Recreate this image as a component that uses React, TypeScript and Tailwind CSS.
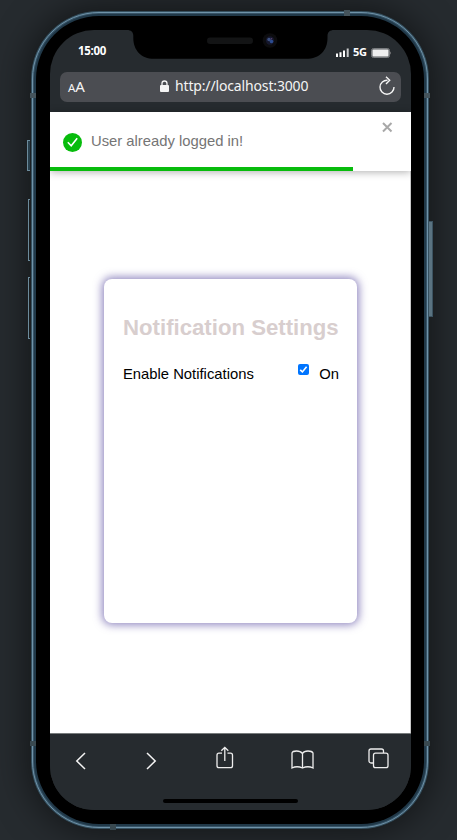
import React from "react";

function Notch() {
  return (
    <div className="absolute left-[77px] top-0">
      <svg width="207" height="30" viewBox="0 0 207 30" className="block">
        <path d="M0 -1V0C4 0 6.300 2 6.300 6V8C6.300 20 14 28.800 27 28.800H179C193 28.800 200.500 20 200.500 8V6C200.500 2 203 0 207 0V-1Z" fill="#000" />
        <rect x="80" y="7.500" width="46" height="6.500" rx="3.200" fill="#131415" />
        <circle cx="143" cy="10.500" r="7.300" fill="#0c0c0e" />
        <circle cx="143" cy="10.500" r="4.200" fill="#15172c" />
        <circle cx="142" cy="9.500" r="1.700" fill="#3c5080" />
        <circle cx="144.500" cy="11.500" r="1.800" fill="#2c4c90" />
        <circle cx="144.500" cy="8.700" r=".8" fill="#5a4273" />
      </svg>
    </div>
  );
}

function StatusBar() {
  return (
    <div className="flex h-[42px] items-start justify-between pl-[28px] pr-[20px] pt-[13px] font-['Noto_Sans',sans-serif] text-[11.500px] font-bold leading-4 text-white">
      <span className="tracking-[-0.300px]">15:00</span>
      <div className="mt-px flex items-center">
        <svg width="13" height="9" viewBox="0 0 13 9">
          <path d="M0 5.500h2V9H0zM3.500 4.200h2V9h-2zM7 2.500h2V9H7z" fill="#fff" />
          <path d="M10.700 .5h2V9h-2z" fill="#c9cacc" />
        </svg>
        <span className="ml-[4px] w-[14px] text-[11px] tracking-[-0.300px]">5G</span>
        <svg className="ml-[4px] mt-px" width="20" height="10" viewBox="0 0 20 10">
          <rect x=".5" y=".5" width="18" height="9" rx="2" fill="#55595c" stroke="#777a7d" />
          <rect x="1.500" y="1.500" width="16" height="7" rx="1" fill="#eee" />
          <path d="M19 3.500c1 .5 1 2.500 0 3z" fill="#888" />
        </svg>
      </div>
    </div>
  );
}

function AddressBar() {
  return (
    <div className="mx-[10px] flex h-[30px] w-[341px] items-center rounded-[7px] bg-[#4b4d52] pl-[8px] pr-[5px] font-['Noto_Sans',sans-serif] text-[#f4f4f4]">
      <div className="-mt-[2px] flex w-[92px] items-baseline leading-none">
        <span className="text-[11.500px]">A</span>
        <span className="text-[15px]">A</span>
      </div>
      <svg className="-mt-[2px]" width="9" height="12" viewBox="0 0 9 12">
        <path d="M2 6V3.500a2.500 2.500 0 0 1 5 0V6" fill="none" stroke="#f4f4f4" strokeWidth="1.300" />
        <rect y="5" width="9" height="7" rx="1" fill="#f4f4f4" />
      </svg>
      <span className="-mt-[2px] ml-[6px] whitespace-nowrap text-[14px] leading-5 tracking-[-0.150px]">http://localhost:3000</span>
      <svg className="-mt-[2px] ml-auto" width="18" height="20" viewBox="0 0 18 20" fill="none" stroke="#f4f4f4" strokeWidth="1.400">
        <path d="M9.500 4.200A7 7 0 1 0 16 11" />
        <path d="M8 .8l3.700 3.500L8 8" />
      </svg>
    </div>
  );
}

function Toast() {
  return (
    <div className="relative -mr-px flex h-[59px] flex-col bg-white shadow-[0_1px_8px_rgba(0,0,0,0.32)]">
      <div className="flex h-[55px] items-center pb-px pl-[13px] pr-[18px] pt-[6px]">
        <svg width="19" height="19" viewBox="0 0 19 19">
          <circle cx="9.500" cy="9.500" r="9.500" fill="#07bc0c" />
          <path d="M4.800 9.300l3.400 3.400L14.200 5.300" fill="none" stroke="#fff" strokeWidth="1.600" />
        </svg>
        <span className="-mt-[2px] ml-[9px] whitespace-nowrap text-[14.800px] leading-5 text-[#757575]">User already logged in!</span>
        <svg className="-mt-[30px] ml-auto" width="11" height="11" viewBox="0 0 11 11">
          <path d="M1 1l8.500 8.500M9.500 1L1 9.500" stroke="#a8a8a8" strokeWidth="2" />
        </svg>
      </div>
      <div className="h-[4px] w-[303px] bg-[#07bc0c]" />
    </div>
  );
}

function SettingsCard() {
  return (
    <section className="ml-[54px] mt-[108px] h-[344px] w-[253px] rounded-[8px] bg-white pl-[19px] pr-[18px] pt-[35px] shadow-[0_0_8px_2px_rgba(72,57,150,0.600)]">
      <h1 className="whitespace-nowrap text-[22.200px] font-bold leading-[28px] text-[#d8cece]">Notification Settings</h1>
      <div className="mt-[22px] flex items-center text-[14.800px] leading-5 text-black">
        <span className="whitespace-nowrap">Enable Notifications</span>
        <span className="mb-[9px] ml-auto flex h-[11px] w-[11px] items-center justify-center rounded-[2px] bg-[#0075ff]">
          <svg width="9" height="9" viewBox="0 0 9 9">
            <path d="M1.200 4.800l2.200 2.100L7.600 1.800" fill="none" stroke="#fff" strokeWidth="1.600" />
          </svg>
        </span>
        <span className="ml-[10px]">On</span>
      </div>
    </section>
  );
}

function BrowserToolbar() {
  return (
    <div className="flex h-[77px] flex-col border-t border-[#777b7c] bg-[#262b2f]">
      <div className="flex h-[53px] items-center pl-[25px] pr-[22px]">
        <svg width="11" height="18" viewBox="0 0 11 18" fill="none" stroke="#f4f4f4" strokeWidth="1.500">
          <path d="M10 1L1.800 9L10 17" />
        </svg>
        <svg className="ml-[60px]" width="11" height="18" viewBox="0 0 11 18" fill="none" stroke="#f4f4f4" strokeWidth="1.500">
          <path d="M1 1L9.200 9L1 17" />
        </svg>
        <svg className="-mt-[6px] ml-[59px]" width="18" height="23" viewBox="0 0 18 23" fill="none" stroke="#eee" strokeWidth="1.300">
          <path d="M6 7.200H3a2 2 0 0 0-2 2v10.500a2 2 0 0 0 2 2h11.500a2 2 0 0 0 2-2V9.200a2 2 0 0 0-2-2h-3M8.800 15V1.500M5.300 4.800L8.800 1.300l3.500 3.500" />
        </svg>
        <svg className="-mt-[2px] ml-[57px]" width="23" height="19" viewBox="0 0 23 19" fill="none" stroke="#eee" strokeWidth="1.300">
          <path d="M1 18V3Q1.500 1 5.500 1T11.500 3.500Q13 1 17 1T22 3V18Q17 15.500 11.500 18Q6 15.500 1 18ZM11.500 3.500V18" />
        </svg>
        <svg className="-mt-[4px] ml-auto" width="21" height="21" viewBox="0 0 21 21" fill="none" stroke="#eee" strokeWidth="1.300">
          <path d="M5 15H3a2 2 0 0 1-2-2V3a2 2 0 0 1 2-2h10.500a2 2 0 0 1 2 2v2" />
          <rect x="5.500" y="5.200" width="14.500" height="14.500" rx="2" />
        </svg>
      </div>
      <div className="mx-auto mt-[12px] h-[4px] w-[135px] rounded-full bg-black" />
    </div>
  );
}

function SideButtons() {
  return (
    <>
      <i className="absolute -left-[4px] top-[129px] h-[31px] w-[3px] border border-r-0 border-[#6c8b9c] bg-[#29404d]" />
      <i className="absolute -left-[3px] top-[188px] h-[62px] w-[2px] border border-r-0 border-[#6c8b9c]" />
      <i className="absolute -left-[3px] top-[266px] h-[62px] w-[2px] border border-r-0 border-[#6c8b9c]" />
      <i className="absolute left-[398px] top-[210px] h-[96px] w-[4px] border border-l-0 border-[#3c5361] bg-[#5a7381]" />
      <i className="absolute -left-px top-[82px] h-[5px] w-[6px] bg-[#45545c]" />
      <i className="absolute -left-px top-[730px] h-[5px] w-[6px] bg-[#394950]" />
      <i className="absolute left-[393px] top-[82px] h-[5px] w-[6px] bg-[#45545c]" />
      <i className="absolute left-[393px] top-[730px] h-[5px] w-[6px] bg-[#394950]" />
      <i className="absolute left-[313px] -top-px h-[6px] w-[6px] bg-[#45545c]" />
      <i className="absolute left-[79px] top-[813px] h-[6px] w-[6px] bg-[#394950]" />
    </>
  );
}

export default function App() {
  return (
    <main className="h-[840px] w-[457px] overflow-hidden bg-[#262b2f] pl-[31px] pt-[11px] font-['Liberation_Sans',Arial,sans-serif]">
      <div className="relative h-[818px] w-[398px] rounded-[68px] bg-[#35505f] p-px shadow-[0_0_34px_4px_rgba(0,0,0,0.500)]">
        <div className="h-full rounded-[67px] border border-[#6f92a8] bg-[#375467] p-px">
          <div className="h-full rounded-[65px] bg-[#203848] p-[2px]">
            <div className="h-full rounded-[63px] bg-black pl-[14px] pt-[14px]">
              <div className="relative flex h-[780px] w-[361px] flex-col overflow-hidden rounded-[44px] bg-[#262b2f]">
                <StatusBar />
                <AddressBar />
                <div className="mt-[10px] min-h-0 flex-1 border-r border-[#c8c8c8] bg-white">
                  <Toast />
                  <SettingsCard />
                </div>
                <BrowserToolbar />
                <Notch />
              </div>
            </div>
          </div>
        </div>
        <SideButtons />
      </div>
    </main>
  );
}
